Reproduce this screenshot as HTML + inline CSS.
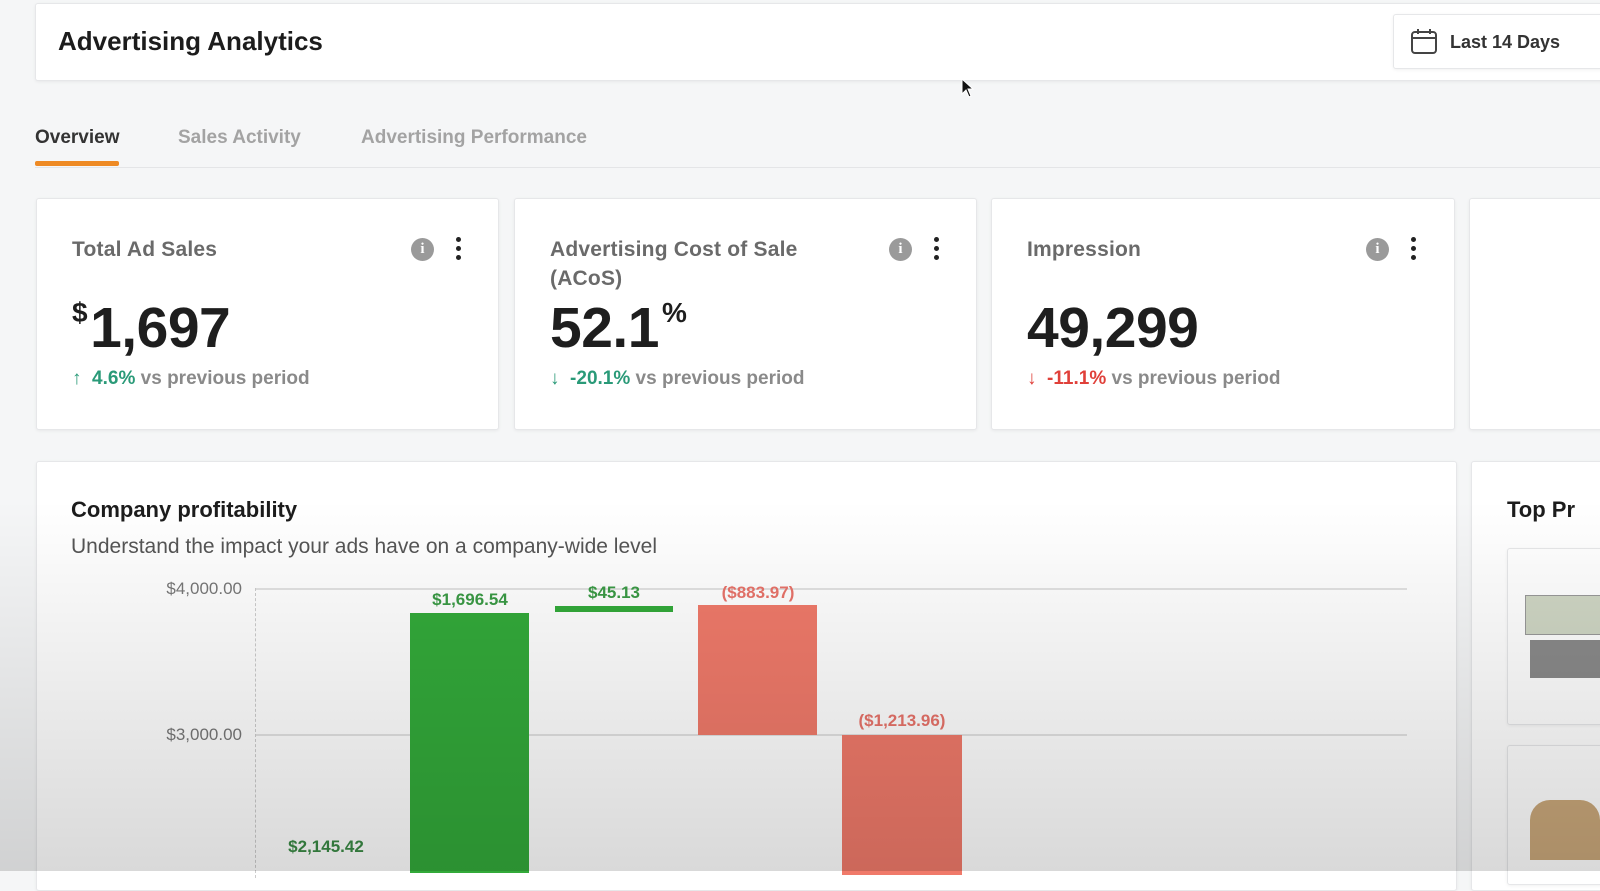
<!DOCTYPE html>
<html><head><meta charset="utf-8"><style>
*{box-sizing:border-box;margin:0;padding:0}
body{width:1600px;height:871px;overflow:hidden;background:#f5f6f7;font-family:"Liberation Sans",sans-serif;position:relative}
.abs{position:absolute}
.card{position:absolute;background:#fff;border:1px solid #e6e7e9;border-radius:3px;box-shadow:0 1px 3px rgba(0,0,0,0.06)}
.ctitle{position:absolute;left:35px;top:36px;font-size:21px;font-weight:bold;color:#6a6a6a;line-height:29px;letter-spacing:0.2px}
.big{position:absolute;left:35px;top:96px;font-size:57px;font-weight:bold;color:#1e1e1e;letter-spacing:-0.5px}
.big sup{font-size:28px;vertical-align:top;position:relative;top:2px;margin-right:3px}
.chg{position:absolute;left:35px;top:169px;font-size:19px;color:#8a8a8a;font-weight:bold}
.info{position:absolute;top:39px;width:23px;height:23px;border-radius:50%;background:#9a9a9a;color:#fff;font-size:15px;font-weight:bold;text-align:center;line-height:23px;font-family:"Liberation Serif",serif}
.dots{position:absolute;top:38px;width:6px}
.dots i{display:block;width:5px;height:5px;border-radius:50%;background:#222;margin-bottom:4px}
.lbl{position:absolute;font-size:17px;font-weight:bold;text-align:center;width:140px}
.tab{position:absolute;top:127px;font-size:19px;font-weight:bold}
</style></head><body>
<div class="card" style="left:35px;top:3px;width:1600px;height:78px;border-radius:3px"></div>
<div class="abs" style="left:58px;top:26px;font-size:26px;font-weight:bold;color:#1c1c1c">Advertising Analytics</div>
<div class="card" style="left:1393px;top:14px;width:240px;height:55px"></div>
<svg class="abs" style="left:1410px;top:28px" width="28" height="27" viewBox="0 0 28 27"><rect x="2" y="4" width="24" height="21" rx="3" fill="none" stroke="#444" stroke-width="2"/><line x1="2" y1="10" x2="26" y2="10" stroke="#444" stroke-width="2"/><line x1="8" y1="1" x2="8" y2="6" stroke="#444" stroke-width="2"/><line x1="20" y1="1" x2="20" y2="6" stroke="#444" stroke-width="2"/></svg>
<div class="abs" style="left:1450px;top:32px;font-size:18px;font-weight:bold;color:#333">Last 14 Days</div>
<svg class="abs" style="left:960px;top:78px" width="14" height="22"><path d="M2 1 L2 16 L6 12 L9 19 L11 18 L8 11 L13 11 Z" fill="#111" stroke="#fff" stroke-width="1"/></svg>

<div class="abs" style="left:35px;top:167px;width:1600px;height:1px;background:#e4e5e7"></div>
<div class="tab" style="left:35px;color:#333">Overview</div>
<div class="tab" style="left:178px;color:#a3a3a3">Sales Activity</div>
<div class="tab" style="left:361px;color:#a3a3a3">Advertising Performance</div>
<div class="abs" style="left:35px;top:161px;width:84px;height:5px;background:#ee8a24;border-radius:2px"></div>

<div class="card" style="left:36px;top:198px;width:463px;height:232px">
<div class="ctitle">Total Ad Sales</div>
<div class="info" style="left:374px">i</div><div class="dots" style="left:419px"><i></i><i></i><i></i></div>
<div class="big"><sup>$</sup>1,697</div>
<div class="chg"><span style="color:#2a9a78">↑ &nbsp;4.6%</span> vs previous period</div>
</div>
<div class="card" style="left:514px;top:198px;width:463px;height:232px">
<div class="ctitle">Advertising Cost of Sale<br>(ACoS)</div>
<div class="info" style="left:374px">i</div><div class="dots" style="left:419px"><i></i><i></i><i></i></div>
<div class="big">52.1<sup style="margin-left:3px">%</sup></div>
<div class="chg"><span style="color:#2a9a78">↓ &nbsp;-20.1%</span> vs previous period</div>
</div>
<div class="card" style="left:991px;top:198px;width:464px;height:232px">
<div class="ctitle">Impression</div>
<div class="info" style="left:374px">i</div><div class="dots" style="left:419px"><i></i><i></i><i></i></div>
<div class="big">49,299</div>
<div class="chg"><span style="color:#e0403a">↓ &nbsp;-11.1%</span> vs previous period</div>
</div>
<div class="card" style="left:1469px;top:198px;width:200px;height:232px"></div>

<div class="card" style="left:36px;top:461px;width:1421px;height:430px"></div>
<div class="abs" style="left:71px;top:497px;font-size:22px;font-weight:bold;color:#1c1c1c">Company profitability</div>
<div class="abs" style="left:71px;top:535px;font-size:21px;color:#555">Understand the impact your ads have on a company-wide level</div>
<div class="abs" style="left:140px;top:579px;width:102px;text-align:right;font-size:17px;color:#777">$4,000.00</div>
<div class="abs" style="left:140px;top:725px;width:102px;text-align:right;font-size:17px;color:#777">$3,000.00</div>
<div class="abs" style="left:255px;top:588px;width:1152px;height:2px;background:#e2e2e2"></div>
<div class="abs" style="left:255px;top:734px;width:1152px;height:2px;background:#e2e2e2"></div>
<div class="abs" style="left:255px;top:588px;height:290px;border-left:1px dashed #ccc"></div>
<div class="abs" style="left:410px;top:613px;width:119px;height:260px;background:#33aa3a"></div>
<div class="abs" style="left:555px;top:606px;width:118px;height:6px;background:#33aa3a"></div>
<div class="abs" style="left:698px;top:605px;width:119px;height:130px;background:#f07a6a"></div>
<div class="abs" style="left:842px;top:735px;width:120px;height:140px;background:#f07a6a"></div>
<div class="lbl" style="left:400px;top:590px;color:#3a9a45">$1,696.54</div>
<div class="lbl" style="left:544px;top:583px;color:#3a9a45">$45.13</div>
<div class="lbl" style="left:688px;top:583px;color:#e8736a">($883.97)</div>
<div class="lbl" style="left:832px;top:711px;color:#e8736a">($1,213.96)</div>
<div class="lbl" style="left:256px;top:837px;color:#3a8a45">$2,145.42</div>

<div class="card" style="left:1471px;top:461px;width:200px;height:430px"></div>
<div class="abs" style="left:1507px;top:497px;font-size:22px;font-weight:bold;color:#1c1c1c">Top Pr</div>
<div class="card" style="left:1507px;top:548px;width:120px;height:177px"></div>
<div class="abs" style="left:1525px;top:595px;width:80px;height:40px;background:#cfd6c4;border:1px solid #999"></div>
<div class="abs" style="left:1530px;top:640px;width:70px;height:38px;background:#8a8a8a"></div>
<div class="card" style="left:1507px;top:745px;width:120px;height:140px"></div>
<div class="abs" style="left:1530px;top:800px;width:70px;height:60px;background:#c9a77a;border-radius:20px 20px 0 0"></div>

<div class="abs" style="left:0;top:0;width:1600px;height:871px;background:linear-gradient(to bottom,rgba(0,0,0,0) 0,rgba(0,0,0,0) 500px,rgba(0,0,0,0.15) 871px);pointer-events:none"></div>
</body></html>
